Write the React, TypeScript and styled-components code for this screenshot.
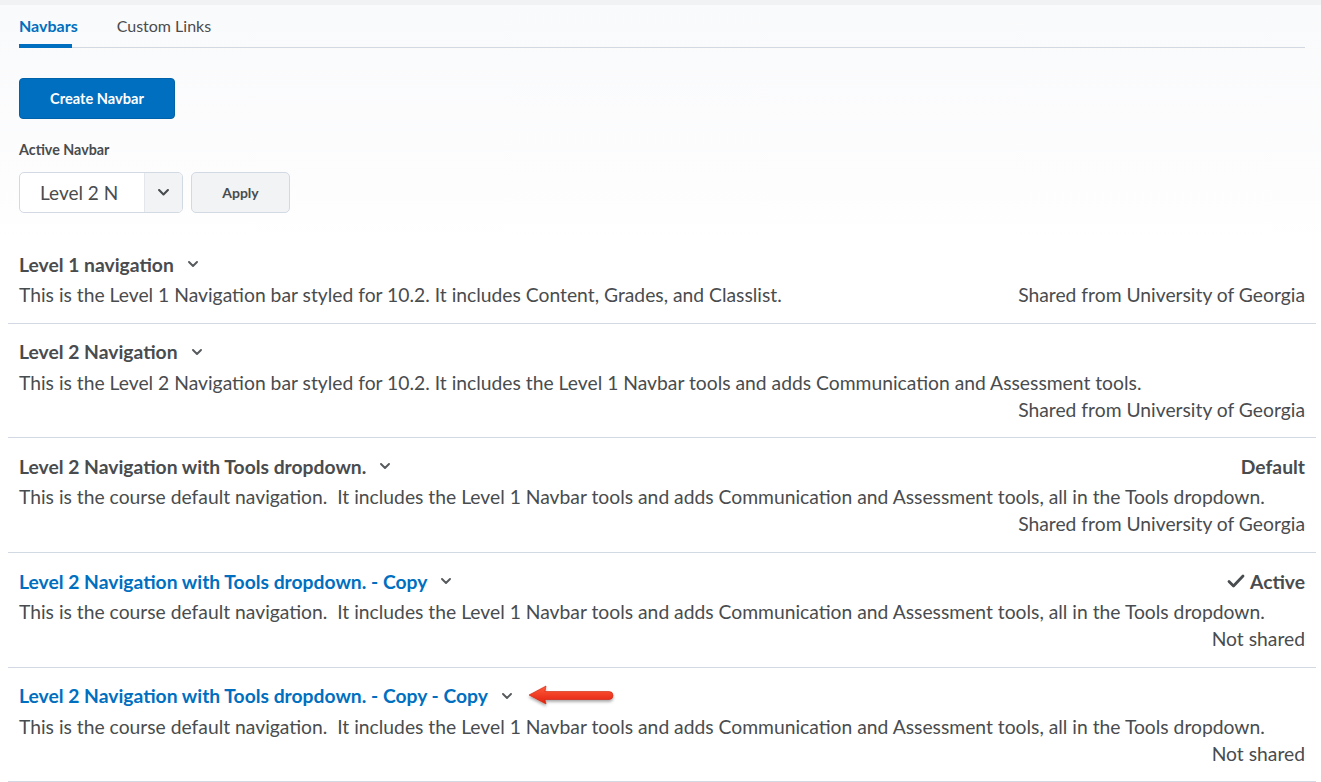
import React from "react";
import styled, { createGlobalStyle } from "styled-components";

const Global = createGlobalStyle`
  html, body { margin: 0; padding: 0; }
  body {
    font-family: Lato, "Open Sans", "Liberation Sans", sans-serif;
    color: #494c4e;
    background: #fff;
  }
  * { box-sizing: border-box; }
`;

const Page = styled.div`
  border-top: 5px solid #f1f2f4;
  background: linear-gradient(#f9fafb 0px, #fdfdfe 180px, #ffffff 240px);
  min-height: 777px;
  padding: 0 16px 0 19px;
`;

const Tabs = styled.div`
  display: flex;
  gap: 39px;
  height: 43px;
  border-bottom: 1px solid #d3d9e3;
  align-items: stretch;
`;

const Tab = styled.div<{ $active?: boolean }>`
  position: relative;
  font-size: 16px;
  font-weight: ${(p) => (p.$active ? 700 : 400)};
  color: ${(p) => (p.$active ? "#006fbf" : "#494c4e")};
  padding-top: 11px;
  line-height: 20px;
  &::after {
    content: "";
    display: ${(p) => (p.$active ? "block" : "none")};
    position: absolute;
    left: 0;
    right: 6px;
    bottom: -1px;
    height: 4px;
    background: #006fbf;
  }
`;

const Toolbar = styled.div`
  padding-top: 30px;
`;

const PrimaryButton = styled.button`
  width: 156px;
  height: 41px;
  border: 1px solid #0062a9;
  border-radius: 4px;
  background: #006fbf;
  color: #fff;
  font-family: inherit;
  font-size: 14.6px;
  font-weight: 700;
  cursor: pointer;
`;

const Label = styled.div`
  margin-top: 22px;
  font-size: 14.3px;
  font-weight: 700;
  line-height: 18px;
`;

const Controls = styled.div`
  display: flex;
  gap: 8px;
  margin-top: 13px;
`;

const Select = styled.div`
  display: flex;
  width: 164px;
  height: 41px;
  border: 1px solid #d3d9e3;
  border-radius: 5px;
  overflow: hidden;
  background: #fff;
`;

const SelectValue = styled.div`
  flex: 1;
  display: flex;
  align-items: center;
  padding-left: 20px;
  font-size: 19px;
  color: #494c4e;
`;

const SelectArrow = styled.div`
  width: 38px;
  display: flex;
  align-items: center;
  justify-content: center;
  background: #f1f3f5;
  border-left: 1px solid #e3e6ea;
  color: #494c4e;
`;

const SecondaryButton = styled.button`
  width: 99px;
  height: 41px;
  border: 1px solid #d3d9e3;
  border-radius: 5px;
  background: #f1f3f5;
  color: #494c4e;
  font-family: inherit;
  font-size: 14px;
  font-weight: 700;
`;

const List = styled.div`
  margin: 23px -11px 0;
`;

const Row = styled.div`
  padding: 15px 11px 14.7px;
  border-bottom: 1px solid #d3d9e3;
`;

const TitleLine = styled.div`
  display: flex;
  align-items: center;
  height: 30px;
  padding-bottom: 4px;
`;

const Title = styled.div<{ $link?: boolean }>`
  font-size: 19.3px;
  font-weight: 700;
  color: ${(p) => (p.$link ? "#006fbf" : "#494c4e")};
  white-space: nowrap;
`;

const Chevron = styled.span`
  display: inline-flex;
  margin-left: 14px;
  color: #565a5c;
`;

const Status = styled.div`
  margin-left: auto;
  display: flex;
  align-items: center;
  gap: 5px;
  font-size: 19.3px;
  font-weight: 700;
`;

const Body = styled.div`
  display: flex;
  flex-wrap: wrap;
  font-size: 19.3px;
  line-height: 27px;
`;

const Description = styled.div`
  white-space: pre-wrap;
`;

const Meta = styled.div`
  margin-left: auto;
  padding-left: 20px;
  text-align: right;
`;

const ArrowMark = styled.svg`
  margin-left: 14px;
  margin-top: 2px;
`;

const ChevronIcon = ({ size = 10 }: { size?: number }) => (
  <svg width={size} height={size * 0.62} viewBox="0 0 10 6.2">
    <path d="M1 1 L5 5 L9 1" fill="none" stroke="currentColor" strokeWidth="1.9" strokeLinecap="round" strokeLinejoin="round" />
  </svg>
);

type Item = {
  title: string;
  link?: boolean;
  status?: "default" | "active";
  description: string;
  meta: string;
  arrow?: boolean;
};

const DESC_COURSE =
  "This is the course default navigation.  It includes the Level 1 Navbar tools and adds Communication and Assessment tools, all in the Tools dropdown.";

const items: Item[] = [
  {
    title: "Level 1 navigation",
    description:
      "This is the Level 1 Navigation bar styled for 10.2. It includes Content, Grades, and Classlist.",
    meta: "Shared from University of Georgia",
  },
  {
    title: "Level 2 Navigation",
    description:
      "This is the Level 2 Navigation bar styled for 10.2. It includes the Level 1 Navbar tools and adds Communication and Assessment tools.",
    meta: "Shared from University of Georgia",
  },
  {
    title: "Level 2 Navigation with Tools dropdown.",
    status: "default",
    description: DESC_COURSE,
    meta: "Shared from University of Georgia",
  },
  {
    title: "Level 2 Navigation with Tools dropdown. - Copy",
    link: true,
    status: "active",
    description: DESC_COURSE,
    meta: "Not shared",
  },
  {
    title: "Level 2 Navigation with Tools dropdown. - Copy - Copy",
    link: true,
    description: DESC_COURSE,
    meta: "Not shared",
    arrow: true,
  },
];

const RedArrow = () => (
  <ArrowMark width="92" height="28" viewBox="0 0 92 28">
    <defs>
      <linearGradient id="ag" x1="0" y1="0" x2="0" y2="1">
        <stop offset="0" stopColor="#ff5a3c" />
        <stop offset="1" stopColor="#e2220c" />
      </linearGradient>
      <filter id="as" x="-20%" y="-40%" width="140%" height="180%">
        <feDropShadow dx="0" dy="2" stdDeviation="1.5" floodColor="#000" floodOpacity="0.35" />
      </filter>
    </defs>
    <path
      d="M3 12 L20 3 L19 8.5 L83 8.5 Q87 8.5 87 12.5 Q87 16.5 83 16.5 L19 16.5 L20 21 Z"
      fill="url(#ag)"
      stroke="#cc200c"
      strokeWidth="0.6"
      strokeLinejoin="round"
      filter="url(#as)"
    />
  </ArrowMark>
);

const CheckIcon = () => (
  <svg width="18" height="14" viewBox="0 0 18 14">
    <path d="M2 7.5 L6.5 12 L16 2" fill="none" stroke="#494c4e" strokeWidth="2.8" strokeLinecap="round" strokeLinejoin="round" />
  </svg>
);

export default function App() {
  return (
    <>
      <Global />
      <Page>
        <Tabs>
          <Tab $active>Navbars</Tab>
          <Tab>Custom Links</Tab>
        </Tabs>
        <Toolbar>
          <PrimaryButton>Create Navbar</PrimaryButton>
          <Label>Active Navbar</Label>
          <Controls>
            <Select>
              <SelectValue>Level 2 N</SelectValue>
              <SelectArrow>
                <ChevronIcon size={11} />
              </SelectArrow>
            </Select>
            <SecondaryButton>Apply</SecondaryButton>
          </Controls>
        </Toolbar>
        <List>
          {items.map((it) => (
            <Row key={it.title}>
              <TitleLine>
                <Title $link={it.link}>{it.title}</Title>
                <Chevron>
                  <ChevronIcon />
                </Chevron>
                {it.arrow && <RedArrow />}
                {it.status === "default" && <Status>Default</Status>}
                {it.status === "active" && (
                  <Status>
                    <CheckIcon />
                    Active
                  </Status>
                )}
              </TitleLine>
              <Body>
                <Description>{it.description}</Description>
                <Meta>{it.meta}</Meta>
              </Body>
            </Row>
          ))}
        </List>
      </Page>
    </>
  );
}
